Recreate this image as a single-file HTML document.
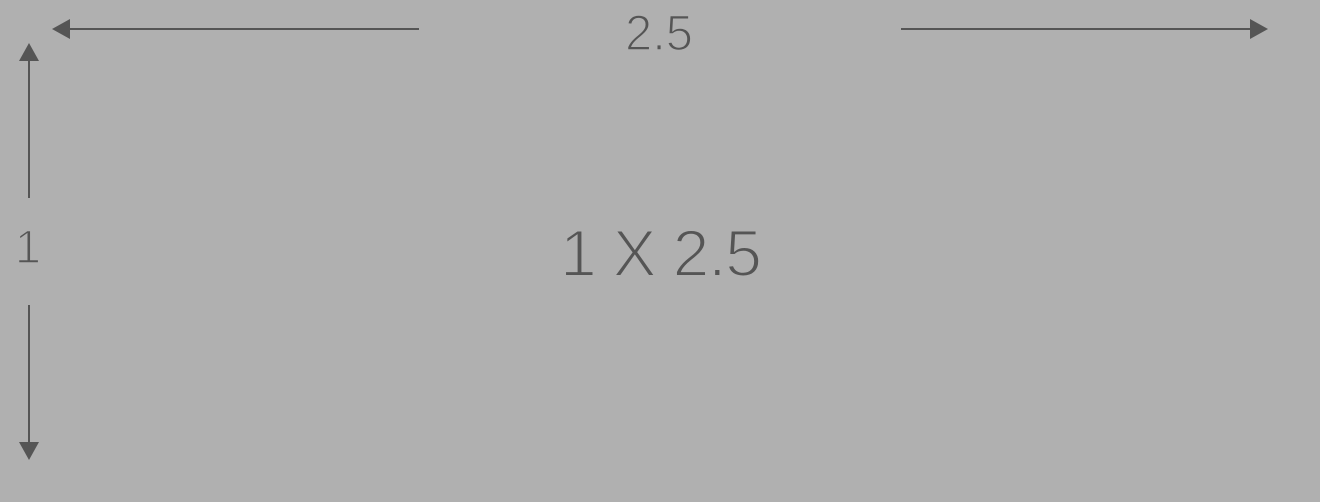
<!DOCTYPE html>
<html><head><style>
html,body{margin:0;padding:0;}
body{width:1320px;height:502px;background:#b0b0b0;overflow:hidden;}
svg{display:block}
text{font-family:"Liberation Sans",sans-serif;fill:#555;stroke:#b0b0b0;}
</style></head><body>
<svg width="1320" height="502" viewBox="0 0 1320 502">
<g fill="#555" stroke="none">
<rect x="66" y="28" width="353" height="2"/>
<polygon points="52,29 70,19 70,39"/>
<rect x="901" y="28" width="353" height="2"/>
<polygon points="1268,29 1250,19 1250,39"/>
<rect x="28" y="58" width="2" height="140"/>
<polygon points="29,43 19,61 39,61"/>
<rect x="28" y="305" width="2" height="140"/>
<polygon points="29,460 19,442 39,442"/>
</g>
<text x="659" y="50" font-size="50" stroke-width="1.6" text-anchor="middle" textLength="68" lengthAdjust="spacingAndGlyphs">2.5</text>
<text x="28" y="263" font-size="47" stroke-width="1.6" text-anchor="middle">1</text>
<text x="661" y="276" font-size="66" stroke-width="2" text-anchor="middle" textLength="202" lengthAdjust="spacing">1 X 2.5</text>
</svg>
</body></html>
